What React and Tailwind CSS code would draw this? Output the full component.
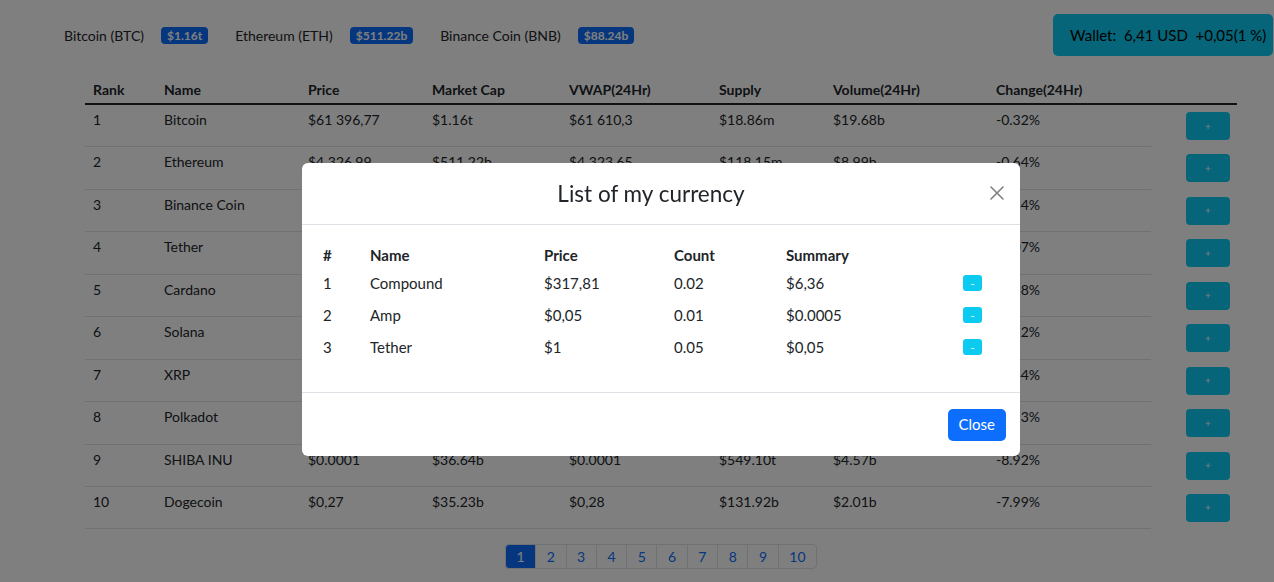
import React from 'react';

const coins = [
  ['1', 'Bitcoin', '$61 396,77', '$1.16t', '$61 610,3', '$18.86m', '$19.68b', '-0.32%'],
  ['2', 'Ethereum', '$4 326,99', '$511.22b', '$4 323,65', '$118.15m', '$8.99b', '-0.64%'],
  ['3', 'Binance Coin', '$523,18', '$88.24b', '$520,31', '$168.14m', '$1.52b', '-0.84%'],
  ['4', 'Tether', '$1', '$62.15b', '$1', '$62.11b', '$48.27b', '-0.07%'],
  ['5', 'Cardano', '$2,16', '$69.34b', '$2,17', '$32.07b', '$2.24b', '-1.38%'],
  ['6', 'Solana', '$197,40', '$59.11b', '$198,73', '$299.47m', '$2.85b', '-3.12%'],
  ['7', 'XRP', '$1,08', '$50.84b', '$1,09', '$46.94b', '$3.71b', '-2.44%'],
  ['8', 'Polkadot', '$43,02', '$42.48b', '$43,51', '$987.57m', '$1.37b', '-2.93%'],
  ['9', 'SHIBA INU', '$0.0001', '$36.64b', '$0.0001', '$549.10t', '$4.57b', '-8.92%'],
  ['10', 'Dogecoin', '$0,27', '$35.23b', '$0,28', '$131.92b', '$2.01b', '-7.99%'],
];

const heads = ['Rank', 'Name', 'Price', 'Market Cap', 'VWAP(24Hr)', 'Supply', 'Volume(24Hr)', 'Change(24Hr)'];
const widths = ['w-[71px]', 'w-[144px]', 'w-[124px]', 'w-[137px]', 'w-[150px]', 'w-[114px]', 'w-[163px]', 'w-[163px]'];

const mine = [
  ['1', 'Compound', '$317,81', '0.02', '$6,36'],
  ['2', 'Amp', '$0,05', '0.01', '$0.0005'],
  ['3', 'Tether', '$1', '0.05', '$0,05'],
];
const mineWidths = ['w-[47px]', 'w-[174px]', 'w-[130px]', 'w-[112px]', 'w-[182px]'];

const TopBadge = ({ name, value }) => (
  <div className="flex items-center">
    <span>{name}</span>
    <span className="ml-[17px] rounded-[4px] bg-[#0d6efd] px-[6px] text-[12px] font-bold leading-[17px] text-white">{value}</span>
  </div>
);

export default function App() {
  return (
    <div className="relative min-h-[582px] bg-white font-['Lato',sans-serif] text-[14px] text-[#212529]">
      <div className="flex h-[56px] items-start pt-[14px] pl-[64px] pr-[1px]">
        <div className="flex h-[42px] items-center gap-[27px]">
          <TopBadge name="Bitcoin (BTC)" value="$1.16t" />
          <TopBadge name="Ethereum (ETH)" value="$511.22b" />
          <TopBadge name="Binance Coin (BNB)" value="$88.24b" />
        </div>
        <div className="ml-auto flex h-[42px] w-[220px] items-center rounded-[5px] bg-[#0dcaf0] pl-[17px] text-[15px] text-black whitespace-pre">
          {'Wallet:  6,41 USD  +0,05(1 %)'}
        </div>
      </div>

      <div className="ml-[85px] mt-[16px] w-[1152px]">
        <div className="flex h-[33px] border-b-2 border-[#212529] pt-[7px] font-bold leading-[21px]">
          {heads.map((h, i) => (
            <div key={h} className={`${widths[i]} px-[8px]`}>{h}</div>
          ))}
        </div>
        {coins.map((c) => (
          <div key={c[0]} className="flex h-[42.44px]">
            <div className="flex w-[1066px] border-b border-[#dee2e6] pt-[4px] leading-[22px]">
              {c.map((v, i) => (
                <div key={i} className={`${widths[i]} px-[8px] whitespace-nowrap`}>{v}</div>
              ))}
            </div>
            <div className="w-[86px] pl-[35px] pt-[7px]">
              <button className="flex h-[28px] w-[44px] items-center justify-center rounded-[4px] bg-[#0dcaf0] text-[10px] text-white">+</button>
            </div>
          </div>
        ))}
        <div className="mt-[15px] flex justify-center">
          <div className="flex h-[25px] text-[#0d6efd]">
            {['1', '2', '3', '4', '5', '6', '7', '8', '9', '10'].map((p, i) => (
              <div
                key={p}
                className={`flex items-center border border-[#dee2e6] px-[10.6px] ${i > 0 ? '-ml-px' : ''} ${i === 0 ? 'rounded-l-[4px] border-[#0d6efd] bg-[#0d6efd] text-white' : ''} ${i === 9 ? 'rounded-r-[4px]' : ''}`}
              >
                {p}
              </div>
            ))}
          </div>
        </div>
      </div>

      <div className="fixed inset-0 bg-black/50">
        <div className="absolute left-[302px] top-[163px] w-[718px] rounded-[6px] bg-white text-[#212529]">
          <div className="relative flex h-[62px] items-center justify-center border-b border-[#dee2e6]">
            <h5 className="mr-[20px] text-[22.5px] leading-[30px]">List of my currency</h5>
            <button className="absolute right-[14px] top-[21px] p-[1px]">
              <svg width="16" height="16" viewBox="0 0 16 16" fill="none" stroke="#808080" strokeWidth="1.6" strokeLinecap="round">
                <path d="M2 2l12 12M14 2L2 14" />
              </svg>
            </button>
          </div>
          <div className="h-[167px] px-[16px] pt-[16px] text-[15px]">
            <div className="flex h-[28px] items-center font-bold">
              {['#', 'Name', 'Price', 'Count', 'Summary'].map((h, i) => (
                <div key={h} className={`${mineWidths[i]} px-[5px]`}>{h}</div>
              ))}
            </div>
            {mine.map((m) => (
              <div key={m[0]} className="flex h-[32px] items-start leading-[28px]">
                {m.map((v, i) => (
                  <div key={i} className={`${mineWidths[i]} px-[5px]`}>{v}</div>
                ))}
                <button className="mt-[6px] flex h-[16px] w-[19px] items-center justify-center rounded-[3px] bg-[#0dcaf0] text-[11px] leading-none text-white">-</button>
              </div>
            ))}
          </div>
          <div className="flex h-[64px] items-center justify-end border-t border-[#dee2e6] pr-[14px]">
            <button className="h-[32px] rounded-[5px] bg-[#0d6efd] px-[11px] text-[15px] text-white">Close</button>
          </div>
        </div>
      </div>
    </div>
  );
}
